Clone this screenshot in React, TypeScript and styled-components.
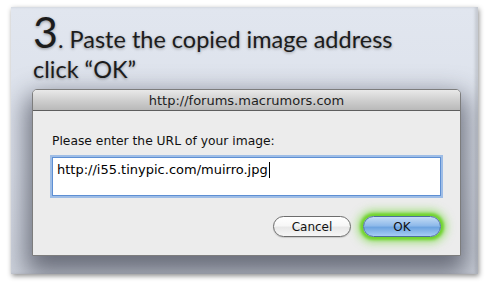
import React from 'react';
import styled, { createGlobalStyle } from 'styled-components';

const GlobalStyle = createGlobalStyle`
  html, body {
    margin: 0;
    padding: 0;
    background: #ffffff;
  }
`;

const Page = styled.div`
  width: 492px;
  height: 290px;
  padding: 7px 0 0 11px;
  box-sizing: border-box;
`;

// 바깥 카드
const Card = styled.div`
  width: 467px;
  height: 267px;
  box-sizing: border-box;
  padding: 3px 19px 0 21px;
  overflow: hidden;
  background: linear-gradient(180deg, #e1e6ef 0%, #dbe0ea 60%, #cfd4de 100%);
  box-shadow: 1px 2px 5px rgba(0, 0, 0, 0.45), inset -3px 0 3px rgba(0, 0, 0, 0.12);
`;

const Heading = styled.h1`
  margin: 0 0 5px 1px;
  font-family: Lato, 'Open Sans', sans-serif;
  font-weight: 400;
  font-size: 23.5px;
  line-height: 30px;
  color: #1c1c1c;
  text-shadow: 0 1px 3px rgba(0, 0, 0, 0.35);
`;

const StepNumber = styled.span`
  font-size: 43px;
  line-height: 1;
`;

// 대화상자
const Dialog = styled.div`
  width: 427px;
  border: 1px solid #7d7d7d;
  border-radius: 5px 5px 0 0;
  background: #ececec;
  box-shadow: 0 12px 26px 6px rgba(40, 44, 58, 0.62);
  font-family: 'DejaVu Sans', Verdana, sans-serif;
`;

const TitleBar = styled.div`
  height: 20px;
  display: flex;
  align-items: center;
  justify-content: center;
  border-radius: 4px 4px 0 0;
  border-bottom: 1px solid #5e5e5e;
  background: linear-gradient(180deg, #e9e9e9 0%, #d2d2d2 45%, #b9b9b9 100%);
  font-size: 13px;
  color: #1e1e1e;
`;

const Body = styled.div`
  padding: 23px 19px 18px 19px;
  display: flex;
  flex-direction: column;
`;

const Label = styled.div`
  font-size: 12.3px;
  line-height: 14px;
  color: #111;
`;

const UrlField = styled.div`
  margin-top: 9px;
  height: 39px;
  box-sizing: border-box;
  padding: 4px 4px;
  background: #fff;
  border: 1px solid #5e8fd3;
  box-shadow: 0 0 0 2px rgba(132, 173, 228, 0.75);
  font-size: 13px;
  line-height: 15px;
  color: #000;
  display: flex;
  align-items: flex-start;
`;

const Caret = styled.span`
  display: inline-block;
  width: 1px;
  height: 16px;
  margin-left: 1px;
  background: #000;
`;

const ButtonRow = styled.div`
  margin-top: 20px;
  display: flex;
  justify-content: flex-end;
  gap: 12px;
`;

const Button = styled.button<{ primary?: boolean }>`
  width: 78px;
  height: 21px;
  padding: 0;
  border-radius: 11px;
  font-family: 'DejaVu Sans', Verdana, sans-serif;
  font-size: 12px;
  color: #111;
  border: 1px solid ${({ primary }) => (primary ? '#4d6f9c' : '#6d6d6d')};
  background: ${({ primary }) =>
    primary
      ? 'linear-gradient(180deg, #c4dcf5 0%, #8fbaea 45%, #6ea4e0 55%, #a7cdf5 100%)'
      : 'linear-gradient(180deg, #ffffff 0%, #f7f7f7 45%, #e8e8e8 55%, #f6f6f6 100%)'};
  box-shadow: ${({ primary }) =>
    primary
      ? '0 0 3px 3px #6fd32c, 0 0 9px 6px rgba(110, 215, 50, 0.55)'
      : '0 1px 1px rgba(0, 0, 0, 0.15)'};
`;

export default function App() {
  return (
    <>
      <GlobalStyle />
      <Page>
        <Card>
          <Heading>
            <StepNumber>3</StepNumber>. Paste the copied image address
            <br />
            click “OK”
          </Heading>
          <Dialog>
            <TitleBar>http://forums.macrumors.com</TitleBar>
            <Body>
              <Label>Please enter the URL of your image:</Label>
              <UrlField>
                http://i55.tinypic.com/muirro.jpg
                <Caret />
              </UrlField>
              <ButtonRow>
                <Button>Cancel</Button>
                <Button primary>OK</Button>
              </ButtonRow>
            </Body>
          </Dialog>
        </Card>
      </Page>
    </>
  );
}
